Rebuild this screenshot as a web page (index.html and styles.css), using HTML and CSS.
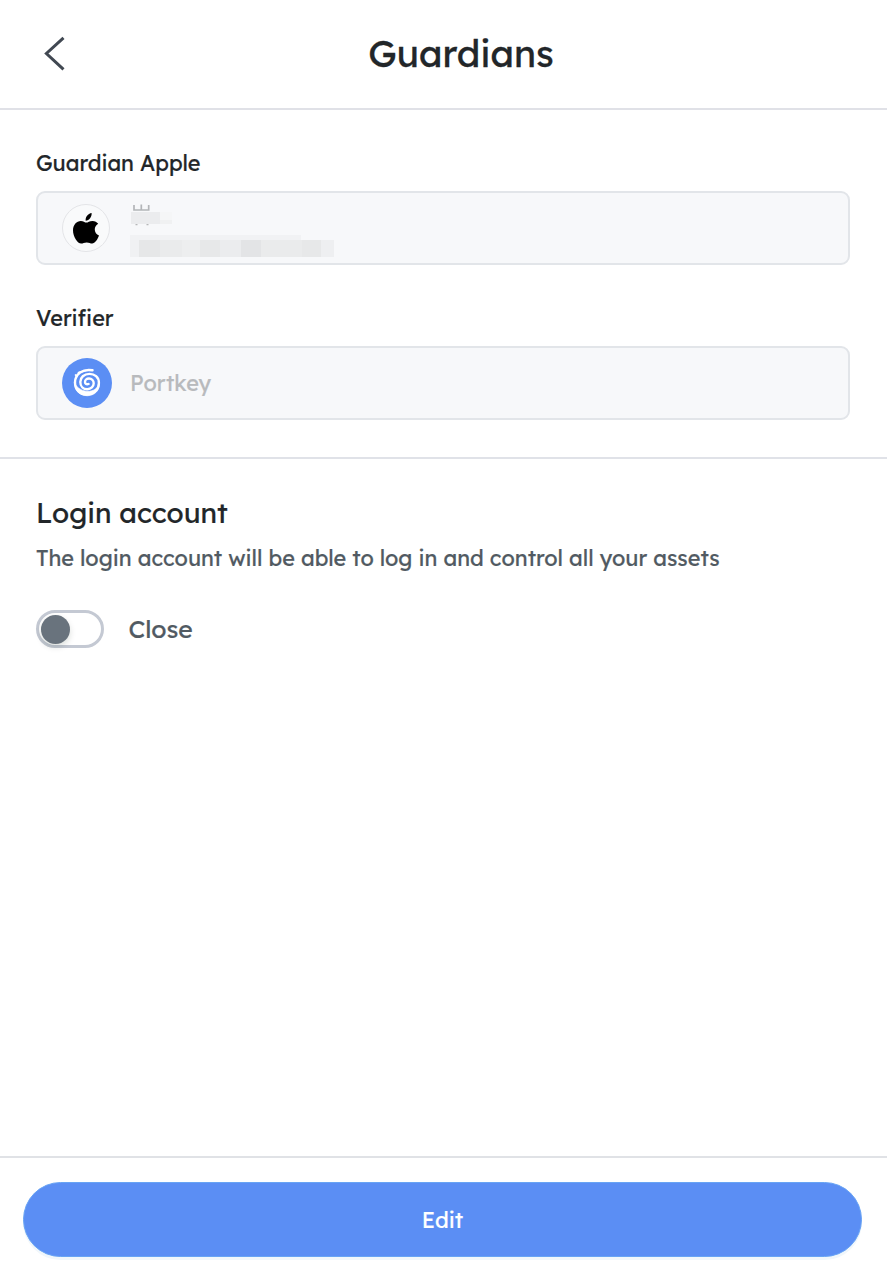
FILE: index.html
```html
<!DOCTYPE html>
<html lang="en">
<head>
<meta charset="utf-8">
<title>Guardians</title>
<link rel="stylesheet" href="styles.css">
</head>
<body>
<div class="page">
  <header class="header">
    <svg class="back" width="22" height="36" viewBox="0 0 22 36" fill="none" stroke="#414852" stroke-width="3"><path d="M19.500 1.800 2.400 17.500 19.500 33.400"/></svg>
    <h1 class="title">Guardians</h1>
  </header>
  <section class="details">
    <div class="group">
      <div class="label">Guardian Apple</div>
      <div class="field">
        <div class="avatar avatar-apple">
          <svg width="28" height="33" viewBox="0 0 28 33"><path d="M19.6 1C20 4.800 17.200 8.600 13.700 8.700C13.200 5 16 1.600 19.600 1ZM14.300 10.600C15.800 10.600 17.400 8.900 20.600 8.900C22.800 8.900 25 10 26.200 11.800C21.300 14.500 21.800 21.400 27 23.600C25.500 28 22.800 31.500 20.200 31.500C18.300 31.500 17.300 30.400 14.700 30.400C12.200 30.400 10.900 31.600 9.200 31.600C5.500 31.600 1 24.800 1 18.300C1 12.600 4.700 8.900 8.800 8.900C11.300 8.900 12.900 10.600 14.300 10.600Z"/></svg>
        </div>
        <svg class="masked" width="210" height="62" viewBox="0 0 210 62">
          <path d="M4 8v5h14.700V8M11.300 7.500v5.500" fill="none" stroke="#b3b5b8" stroke-width="1.700"/>
          <path d="M5.500 27.500h2M16.500 27.500h2" stroke="#b5b6b8" stroke-width="1.500"/>
          <path d="M1 15H30v12H1z" fill="#ebecee"/><path d="M30 15h12v8H30z" fill="#f5f6f7"/><path d="M30 23h12v4H30z" fill="#f0f1f2"/>
          <path d="M0 38h171v5H0z" fill="#f1f2f4"/><path d="M0 43h10v17H0z" fill="#f0f1f3"/>
          <path d="M9 43h21v17H9z" fill="#e6e7e8"/><path d="M30 43h22v17H30z" fill="#eaebec"/><path d="M52 43h18v17H52z" fill="#edeeef"/><path d="M70 43h20v17H70z" fill="#e7e8e9"/><path d="M90 43h21v17H90z" fill="#ebecee"/><path d="M111 43h20v17h-20z" fill="#e3e4e6"/><path d="M131 43h41v17h-41z" fill="#eaebec"/><path d="M172 43h19v17h-19z" fill="#e7e8e9"/><path d="M191 43h13v17h-13z" fill="#eeeff1"/>
        </svg>
      </div>
    </div>
    <div class="group">
      <div class="label">Verifier</div>
      <div class="field">
        <div class="avatar avatar-portkey">
          <svg width="30" height="30" viewBox="0 0 30 30" fill="none" stroke="#fff" stroke-linecap="round">
            <path d="M20.500 2.300C11 .5 3 6 3 14.500C3 22 8.200 26.500 14.600 26.500C22 26.500 26.900 21 26.900 15C26.900 9 22.500 5.900 17.500 5.900C12 5.900 8.300 9.500 8.300 14C8.300 18.500 11.500 21.200 15.300 21.200C19 21.200 21.700 18.600 21.700 15.300C21.700 12.300 19.500 10.500 17 10.500C14.500 10.500 13 12.200 13 14C13 15.800 14.500 16.800 16.500 16" stroke-width="2.400"/>
            <path d="M2.500 15C2.500 32 27.500 32 27.500 15.500C24 26 8 26 2.500 15Z" fill="#fff" stroke-width=".6"/>
            <path d="M3.500 7 5 8.500M6.500 4.500 14 2.500" stroke-width="1.700"/>
          </svg>
        </div>
        <span class="verifier-name">Portkey</span>
      </div>
    </div>
  </section>
  <main class="login">
    <h2 class="subtitle">Login account</h2>
    <p class="description">The login account will be able to log in and control all your assets</p>
    <div class="switch-row">
      <div class="switch"><span class="knob"></span></div>
      <span class="state">Close</span>
    </div>
  </main>
  <footer class="footer"><button class="edit"><span class="edit-text">Edit</span></button></footer>
</div>
</body>
</html>
```

FILE: styles.css
```css
* { box-sizing: border-box; }
body { margin: 0; background: #fff; font-family: Lexend, Lato, sans-serif; color: #222629; }
h1, h2, p { margin: 0; font-weight: 400; }
.page { height: 1280px; display: flex; flex-direction: column; }
.title, .label, .subtitle, .description, .state, .edit-text, .verifier-name { white-space: nowrap; -webkit-text-stroke: .2px currentColor; }
.header { height: 110px; border-bottom: 2px solid #e0e1e7; display: flex; align-items: center; padding: 0 31px 0 44px; flex: none; }
.back { flex: none; display: block; }
.title { flex: 1; margin-bottom: 2px; text-align: center; font-size: 37.1px; line-height: 48px; -webkit-text-stroke-width: .3px; }
.details { height: 349px; flex: none; border-bottom: 2px solid #e0e2e8; padding: 38px 37px 0 36px; display: flex; flex-direction: column; gap: 38px; }
.label { height: 30px; line-height: 30px; margin-bottom: 13px; font-size: 21.66px; }
.field { height: 74px; border: 2px solid #e2e5e9; border-radius: 9px; background: #f7f8fa; display: flex; align-items: center; padding-left: 24px; }
.avatar { width: 50px; height: 50px; border-radius: 50%; display: flex; align-items: center; justify-content: center; flex: none; }
.avatar-apple { width: 48px; height: 48px; border: 1px solid #e4e5e8; background: #f9fafb; margin-right: 2px; }
.avatar-portkey { background: #5b8ef4; }
.masked { margin-left: 18px; flex: none; }
.verifier-name { margin-left: 18px; margin-bottom: 2px; font-size: 21.66px; color: #b8babd; }
.login { flex: 1; padding: 35px 36px 0; }
.subtitle { font-size: 27.8px; line-height: 38px; }
.description { margin-top: 11px; font-size: 21.66px; line-height: 30px; color: #515a62; }
.switch-row { display: flex; align-items: center; margin-top: 36px; height: 40px; }
.switch { width: 68px; height: 38px; border: 3px solid #c4c9d3; border-radius: 19px; display: flex; align-items: center; padding-left: 2px; }
.knob { width: 29px; height: 29px; border-radius: 50%; background: #69737d; box-shadow: 0 3px 6px rgba(0, 35, 11, .15); }
.state { margin: 0 0 2px 24.5px; font-size: 24.75px; color: #515a62; }
.footer { height: 124px; flex: none; border-top: 2px solid #e0e2e6; padding: 24px 25px 0 23px; }
.edit { display: block; width: 100%; height: 75px; padding: 0; border: 1.500px solid #68a4f4; border-radius: 38px; background: #5b8ef4; color: #fff; font: 21.66px Lexend, Lato, sans-serif; box-shadow: 0 3px 0 #f1f7fb; }
```
